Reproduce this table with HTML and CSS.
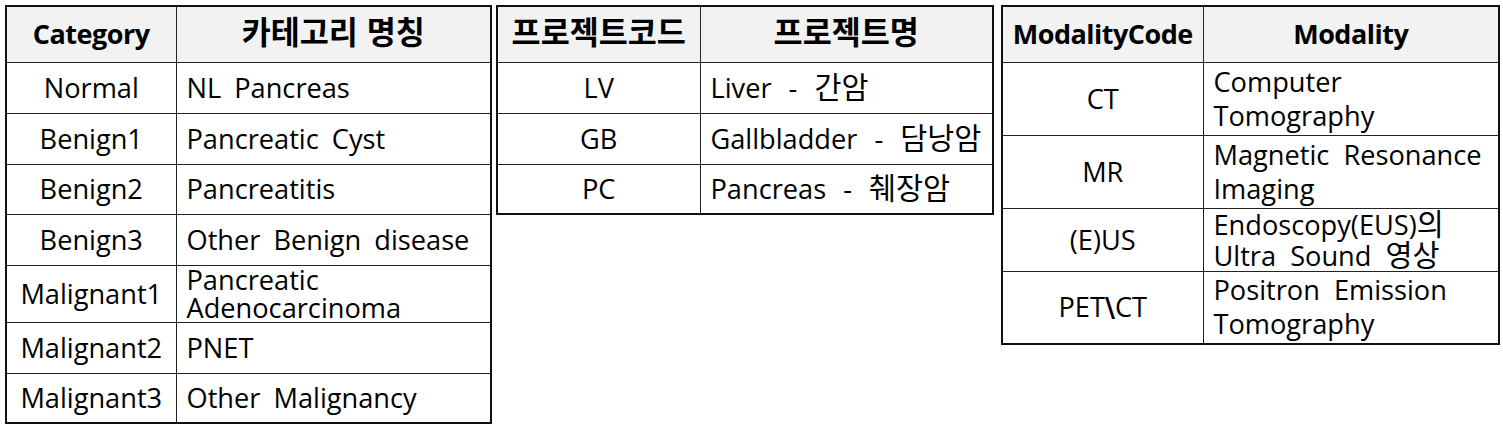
FILE: index.html
```html
<!DOCTYPE html>
<html lang="ko">
<head>
<meta charset="utf-8">
<link rel="stylesheet" href="styles.css">
</head>
<body>
<div class="page">
  <table class="tbl t1">
    <colgroup><col class="c1"><col class="c2"></colgroup>
    <thead>
      <tr class="hd"><th>Category</th><th><span class="ko">카테고리 명칭</span></th></tr>
    </thead>
    <tbody>
      <tr class="r51"><td class="code">Normal</td><td class="desc">NL Pancreas</td></tr>
      <tr class="r51"><td class="code">Benign1</td><td class="desc">Pancreatic Cyst</td></tr>
      <tr class="r50"><td class="code">Benign2</td><td class="desc">Pancreatitis</td></tr>
      <tr class="r51"><td class="code">Benign3</td><td class="desc">Other Benign disease</td></tr>
      <tr class="r57"><td class="code">Malignant1</td><td class="desc two">Pancreatic<br>Adenocarcinoma</td></tr>
      <tr class="r51"><td class="code">Malignant2</td><td class="desc">PNET</td></tr>
      <tr class="r50"><td class="code">Malignant3</td><td class="desc">Other Malignancy</td></tr>
    </tbody>
  </table>

  <table class="tbl t2">
    <colgroup><col class="c1"><col class="c2"></colgroup>
    <thead>
      <tr class="hd"><th><span class="ko">프로젝트코드</span></th><th><span class="ko">프로젝트명</span></th></tr>
    </thead>
    <tbody>
      <tr class="r51"><td class="code">LV</td><td class="desc">Liver - <span class="ko">간암</span></td></tr>
      <tr class="r51"><td class="code">GB</td><td class="desc">Gallbladder - <span class="ko">담낭암</span></td></tr>
      <tr class="r50"><td class="code">PC</td><td class="desc">Pancreas - <span class="ko">췌장암</span></td></tr>
    </tbody>
  </table>

  <table class="tbl t3">
    <colgroup><col class="c1"><col class="c2"></colgroup>
    <thead>
      <tr class="hd"><th>ModalityCode</th><th>Modality</th></tr>
    </thead>
    <tbody>
      <tr class="r73"><td class="code">CT</td><td class="desc two">Computer<br>Tomography</td></tr>
      <tr class="r73"><td class="code">MR</td><td class="desc two">Magnetic Resonance<br>Imaging</td></tr>
      <tr class="r62"><td class="code">(E)US</td><td class="desc tight">Endoscopy(EUS)<span class="ko">의</span><br>Ultra Sound <span class="ko">영상</span></td></tr>
      <tr class="r73"><td class="code">PET<span class="bs">\</span>CT</td><td class="desc two">Positron Emission<br>Tomography</td></tr>
    </tbody>
  </table>
</div>
</body>
</html>
```

FILE: styles.css
```css
html, body {
  margin: 0;
  padding: 0;
  background: #ffffff;
}

.page {
  display: flex;
  align-items: flex-start;
  padding: 5px 0 0 5px;
  font-family: "Open Sans", "Noto Sans CJK KR", sans-serif;
  color: #000;
}

.tbl {
  border-collapse: collapse;
  table-layout: fixed;
  border: 2px solid #111;
  flex: none;
}

.tbl th,
.tbl td {
  border: 1px solid #222;
  padding: 0;
  font-size: 27.2px;
  line-height: 30px;
  vertical-align: middle;
}

.tbl th {
  background: #f2f2f2;
  font-weight: 700;
  font-size: 27px;
  text-align: center;
  letter-spacing: -0.5px;
}

.ko {
  font-family: "Noto Sans CJK KR", sans-serif;
  font-size: 1.08em;
  line-height: 0;
}

.tbl th .ko {
  font-size: 1.17em;
  letter-spacing: 0;
}

.hd { height: 56px; }
.r50 { height: 50px; }
.r51 { height: 51px; }
.r57 { height: 57px; }
.r62 { height: 62px; }
.r73 { height: 73px; }

.code {
  text-align: center;
}

.desc {
  text-align: left;
  padding-left: 10px !important;
  word-spacing: 6px;
}

.t1 { width: 485px; }
.t1 .c1 { width: 170px; }
.t1 .c2 { width: 315px; }
.t1 .two { line-height: 28px; }

.t2 { width: 496px; margin-left: 4px; }
.t2 .c1 { width: 203px; }
.t2 .c2 { width: 293px; }
.t2 .desc { word-spacing: 10px; }

.t3 { width: 497px; margin-left: 7px; }
.t3 .c1 { width: 201px; }
.t3 .c2 { width: 296px; }
.t3 .two { line-height: 34px; }
.t3 .tight { line-height: 31px; }
.t3 .desc { word-spacing: 7px; }

.bs {
  font-weight: 700;
  font-family: "DejaVu Sans", sans-serif;
}
```
